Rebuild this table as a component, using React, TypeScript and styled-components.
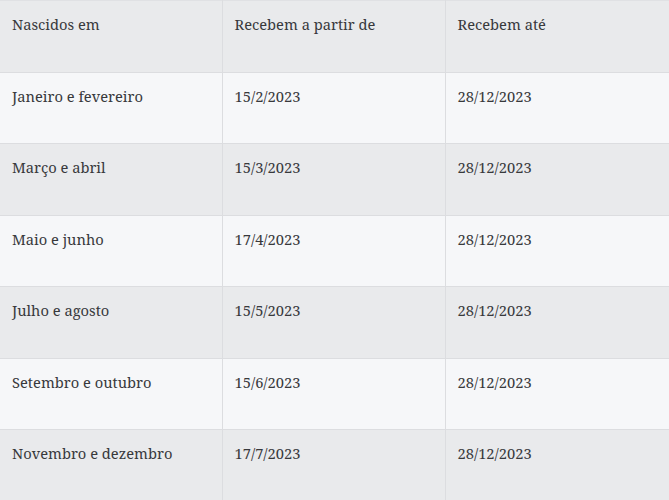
import React from 'react';
import styled, { createGlobalStyle } from 'styled-components';

const GlobalStyle = createGlobalStyle`
  body {
    margin: 0;
    background: #ffffff;
    font-family: "Noto Serif", "Liberation Serif", serif;
  }
`;

const Table = styled.table`
  width: 669px;
  border-collapse: collapse;
  table-layout: fixed;
  border-top: 1px solid #e0e1e4;
  color: #38393c;
  font-size: 14.7px;
`;

const Row = styled.tr<{ $shade: boolean }>`
  height: 71.5px;
  background: ${(p) => (p.$shade ? '#e9eaec' : '#f6f7f9')};
`;

const Cell = styled.td`
  vertical-align: top;
  padding: 13px 12px 0 12px;
  line-height: 20px;
  border-bottom: 1px solid #dcdde0;
  border-right: 1px solid #dcdde0;
  &:last-child {
    border-right: none;
  }
`;

const HeadCell = styled(Cell).attrs({ as: 'th' })`
  font-weight: normal;
  text-align: left;
`;

const rows: [string, string, string][] = [
  ['Janeiro e fevereiro', '15/2/2023', '28/12/2023'],
  ['Março e abril', '15/3/2023', '28/12/2023'],
  ['Maio e junho', '17/4/2023', '28/12/2023'],
  ['Julho e agosto', '15/5/2023', '28/12/2023'],
  ['Setembro e outubro', '15/6/2023', '28/12/2023'],
  ['Novembro e dezembro', '17/7/2023', '28/12/2023'],
];

const App: React.FC = () => {
  return (
    <>
      <GlobalStyle />
      <Table>
        <colgroup>
          <col style={{ width: 222 }} />
          <col style={{ width: 223 }} />
          <col style={{ width: 224 }} />
        </colgroup>
        <thead>
          <Row $shade>
            <HeadCell>Nascidos em</HeadCell>
            <HeadCell>Recebem a partir de</HeadCell>
            <HeadCell>Recebem até</HeadCell>
          </Row>
        </thead>
        <tbody>
          {rows.map((r, i) => (
            <Row key={r[0]} $shade={i % 2 === 1}>
              <Cell>{r[0]}</Cell>
              <Cell>{r[1]}</Cell>
              <Cell>{r[2]}</Cell>
            </Row>
          ))}
        </tbody>
      </Table>
    </>
  );
};

export default App;
